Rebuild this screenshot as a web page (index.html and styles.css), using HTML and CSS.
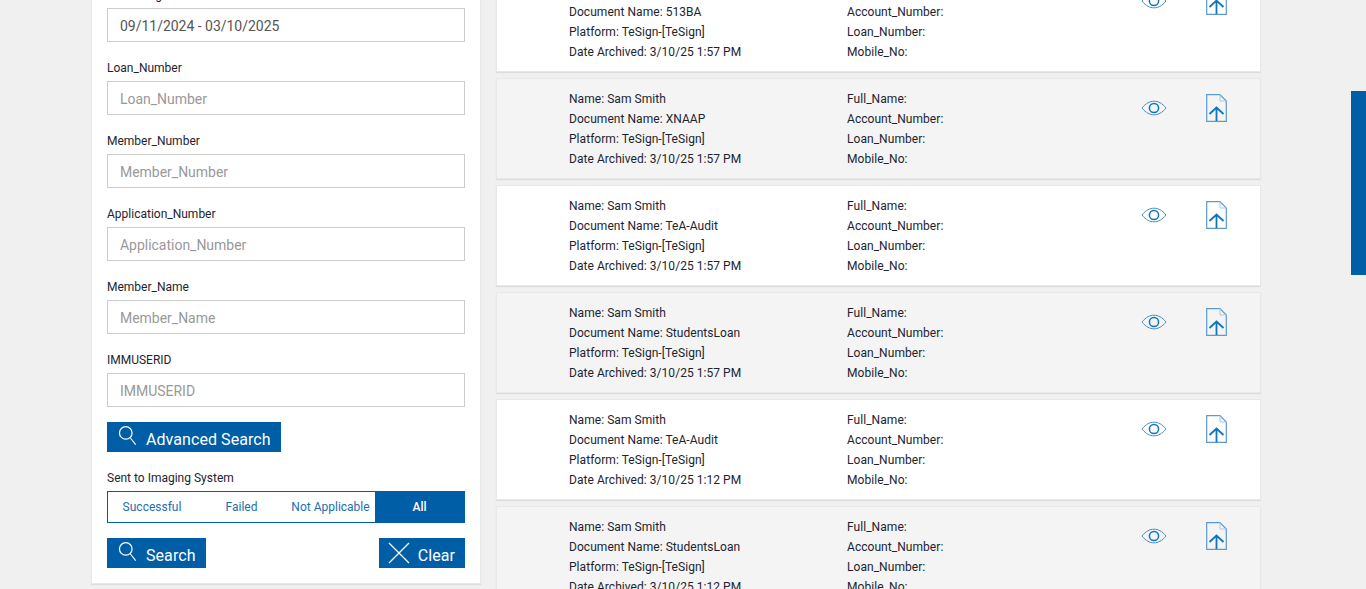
FILE: index.html
```html
<!DOCTYPE html>
<html lang="en">

<head>
    <meta charset="UTF-8">
    <title>Archive Search</title>
    <link rel="stylesheet" href="styles.css">
</head>

<body>
    <svg class="iconDefs" width="0" height="0">
        <symbol id="searchIcon" viewBox="0 0 22 24">
            <circle cx="9" cy="9" r="7.3" fill="none" stroke="currentColor" stroke-width="1.4" />
            <path d="M14.2 14.6 L20.5 22.5" fill="none" stroke="currentColor" stroke-width="1.2" />
        </symbol>
        <symbol id="eyeIcon" viewBox="0 0 26 16">
            <path d="M1 8 C5 3 9 1.2 13 1.2 C17 1.2 21 3 25 8 C21 13 17 14.8 13 14.8 C9 14.8 5 13 1 8 Z" fill="none" stroke="#4a90c8" stroke-width="1" />
            <circle cx="13" cy="8" r="4.6" fill="none" stroke="#0f75bc" stroke-width="1.5" />
        </symbol>
        <symbol id="docIcon" viewBox="0 0 21 28">
            <path d="M0.7 0.7 H14 L20.3 7 V27.3 H0.7 Z" fill="none" stroke="#5b9ad0" stroke-width="1.2" />
            <path d="M14 0.7 V7 H20.3" fill="none" stroke="#a9c9e6" stroke-width="1" />
            <path d="M10.5 27 V13.5 M3.5 20 L10.5 13.5 L17.5 20" fill="none" stroke="#0f75bc" stroke-width="1.8" />
        </symbol>
    </svg>

    <div class="page">
        <div class="filterPanel">
            <div class="field">
                <label>Date Range</label>
                <input type="text" value="09/11/2024 - 03/10/2025">
            </div>
            <div class="field">
                <label>Loan_Number</label>
                <input type="text" placeholder="Loan_Number">
            </div>
            <div class="field">
                <label>Member_Number</label>
                <input type="text" placeholder="Member_Number">
            </div>
            <div class="field">
                <label>Application_Number</label>
                <input type="text" placeholder="Application_Number">
            </div>
            <div class="field">
                <label>Member_Name</label>
                <input type="text" placeholder="Member_Name">
            </div>
            <div class="field lastField">
                <label>IMMUSERID</label>
                <input type="text" placeholder="IMMUSERID">
            </div>

            <button class="blueBtn advancedBtn"><svg class="btnIcon"><use href="#searchIcon" /></svg>Advanced Search</button>

            <label class="toggleLabel">Sent to Imaging System</label>
            <div class="toggle">
                <span class="toggleItem">Successful</span>
                <span class="toggleItem">Failed</span>
                <span class="toggleItem">Not Applicable</span>
                <span class="toggleItem active">All</span>
            </div>

            <div class="actions">
                <button class="blueBtn"><svg class="btnIcon"><use href="#searchIcon" /></svg>Search</button>
                <button class="blueBtn clearBtn">
                    <svg class="btnIcon clearIcon" viewBox="0 0 22 22"><path d="M1 1 L21 21 M21 1 L1 21" fill="none" stroke="currentColor" stroke-width="1.3" /></svg>Clear
                </button>
            </div>
        </div>

        <div class="results">
            <div class="card">
                <div class="col colLeft">
                    <div>Name: Sam Smith</div>
                    <div>Document Name: 513BA</div>
                    <div>Platform: TeSign-[TeSign]</div>
                    <div>Date Archived: 3/10/25 1:57 PM</div>
                </div>
                <div class="col colRight">
                    <div>Full_Name:</div>
                    <div>Account_Number:</div>
                    <div>Loan_Number:</div>
                    <div>Mobile_No:</div>
                </div>
                <svg class="eye"><use href="#eyeIcon" /></svg>
                <svg class="doc"><use href="#docIcon" /></svg>
            </div>
            <div class="card alt">
                <div class="col colLeft">
                    <div>Name: Sam Smith</div>
                    <div>Document Name: XNAAP</div>
                    <div>Platform: TeSign-[TeSign]</div>
                    <div>Date Archived: 3/10/25 1:57 PM</div>
                </div>
                <div class="col colRight">
                    <div>Full_Name:</div>
                    <div>Account_Number:</div>
                    <div>Loan_Number:</div>
                    <div>Mobile_No:</div>
                </div>
                <svg class="eye"><use href="#eyeIcon" /></svg>
                <svg class="doc"><use href="#docIcon" /></svg>
            </div>
            <div class="card">
                <div class="col colLeft">
                    <div>Name: Sam Smith</div>
                    <div>Document Name: TeA-Audit</div>
                    <div>Platform: TeSign-[TeSign]</div>
                    <div>Date Archived: 3/10/25 1:57 PM</div>
                </div>
                <div class="col colRight">
                    <div>Full_Name:</div>
                    <div>Account_Number:</div>
                    <div>Loan_Number:</div>
                    <div>Mobile_No:</div>
                </div>
                <svg class="eye"><use href="#eyeIcon" /></svg>
                <svg class="doc"><use href="#docIcon" /></svg>
            </div>
            <div class="card alt">
                <div class="col colLeft">
                    <div>Name: Sam Smith</div>
                    <div>Document Name: StudentsLoan</div>
                    <div>Platform: TeSign-[TeSign]</div>
                    <div>Date Archived: 3/10/25 1:57 PM</div>
                </div>
                <div class="col colRight">
                    <div>Full_Name:</div>
                    <div>Account_Number:</div>
                    <div>Loan_Number:</div>
                    <div>Mobile_No:</div>
                </div>
                <svg class="eye"><use href="#eyeIcon" /></svg>
                <svg class="doc"><use href="#docIcon" /></svg>
            </div>
            <div class="card">
                <div class="col colLeft">
                    <div>Name: Sam Smith</div>
                    <div>Document Name: TeA-Audit</div>
                    <div>Platform: TeSign-[TeSign]</div>
                    <div>Date Archived: 3/10/25 1:12 PM</div>
                </div>
                <div class="col colRight">
                    <div>Full_Name:</div>
                    <div>Account_Number:</div>
                    <div>Loan_Number:</div>
                    <div>Mobile_No:</div>
                </div>
                <svg class="eye"><use href="#eyeIcon" /></svg>
                <svg class="doc"><use href="#docIcon" /></svg>
            </div>
            <div class="card alt">
                <div class="col colLeft">
                    <div>Name: Sam Smith</div>
                    <div>Document Name: StudentsLoan</div>
                    <div>Platform: TeSign-[TeSign]</div>
                    <div>Date Archived: 3/10/25 1:12 PM</div>
                </div>
                <div class="col colRight">
                    <div>Full_Name:</div>
                    <div>Account_Number:</div>
                    <div>Loan_Number:</div>
                    <div>Mobile_No:</div>
                </div>
                <svg class="eye"><use href="#eyeIcon" /></svg>
                <svg class="doc"><use href="#docIcon" /></svg>
            </div>
        </div>
    </div>

    <div class="sideTab"></div>
</body>

</html>
```

FILE: styles.css
```css
html,
body {
    height: 100%;
    margin: 0;
    overflow: hidden;
}

body {
    background-color: #f0f0f0;
    font-family: Roboto, sans-serif;
    font-size: 12px;
    color: #1c2430;
}

.iconDefs {
    position: absolute;
}

/* the page is scrolled a little in the picture */
.page {
    display: flex;
    align-items: flex-start;
    gap: 15px;
    margin-top: -29px;
    padding-left: 91px;
}

.filterPanel {
    width: 358px;
    padding: 13px 15px 15px;
    border: 1px solid #e8e8e8;
    background-color: white;
    box-shadow: 0 1px 1px rgba(0, 0, 0, 0.08);
}

.field {
    display: flex;
    flex-direction: column;
    gap: 3px;
    margin-bottom: 16px;
}

.lastField {
    margin-bottom: 15px;
}

label {
    display: block;
    line-height: 20px;
}

input {
    box-sizing: border-box;
    width: 100%;
    height: 34px;
    padding: 2px 12px 0;
    border: 1px solid #cccccc;
    border-radius: 0;
    outline: none;
    font-family: inherit;
    font-size: 14px;
    letter-spacing: -0.02px;
    color: #555555;
    background-color: white;
}

input::placeholder {
    color: #999999;
    opacity: 1;
}

.blueBtn {
    display: flex;
    align-items: center;
    height: 30px;
    padding: 4px 10px 0;
    border: none;
    border-radius: 0;
    background-color: #005ea6;
    color: white;
    font-family: inherit;
    font-size: 16px;
    letter-spacing: 0.07px;
}

.btnIcon {
    width: 19px;
    height: 21px;
    margin: -7px 9px 0 1px;
    flex: none;
}

.advancedBtn {
    margin-bottom: 16px;
}

.toggleLabel {
    margin-bottom: 3px;
}

.toggle {
    box-sizing: border-box;
    display: flex;
    height: 32px;
    margin-bottom: 15px;
    border: 1px solid #005ea6;
    background-color: white;
}

.toggleItem {
    width: 89px;
    line-height: 30px;
    text-align: center;
    white-space: nowrap;
    color: #1b6fb0;
}

.toggleItem:first-child {
    padding-right: 1px;
    width: 88px;
}

.toggleItem.active {
    flex: 1;
    background-color: #005ea6;
    color: white;
    font-weight: 500;
}

.actions {
    display: flex;
    justify-content: space-between;
}

.clearBtn {
    padding: 4px 10px 0 9px;
}

.clearIcon {
    width: 22px;
    height: 22px;
    margin: -4px 8px 0 0;
}

.results {
    display: flex;
    flex-direction: column;
    gap: 6px;
    width: 765px;
}

.card {
    box-sizing: border-box;
    display: flex;
    align-items: flex-start;
    height: 101px;
    padding: 10px 0 0 72px;
    border: 1px solid #e8e8e8;
    background-color: white;
    box-shadow: 0 1px 1px rgba(0, 0, 0, 0.08);
}

.alt {
    background-color: #f4f4f4;
}

.col {
    line-height: 20px;
    letter-spacing: 0.05px;
}

.colLeft {
    width: 278px;
}

.colRight {
    width: 295px;
}

.eye {
    width: 26px;
    height: 16px;
    margin: 11px 39px 0 -1px;
    flex: none;
}

.doc {
    width: 21px;
    height: 28px;
    margin-top: 5px;
    flex: none;
}

.sideTab {
    position: absolute;
    top: 91px;
    right: 0;
    width: 15px;
    height: 184px;
    background-color: #005ea6;
}
```
